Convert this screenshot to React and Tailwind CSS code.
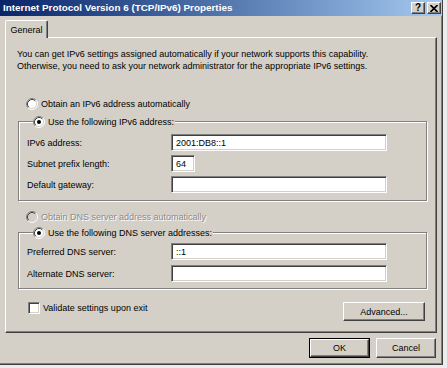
import React from "react";

const font = { fontFamily: '"Liberation Sans", Arial, sans-serif' };

// ── Radio ──────────────────────────────────────────────────
function Radio({ checked, disabled }) {
  return (
    <svg width="12" height="12" viewBox="0 0 12 12" className="shrink-0">
      <circle cx="6" cy="6" r="5" fill={disabled ? "#d4d0c8" : "#ffffff"} />
      <path d="M2.11 9.89 A5.5 5.5 0 0 1 9.89 2.11" fill="none" stroke="#808080" />
      <path d="M9.89 2.11 A5.5 5.5 0 0 1 2.11 9.89" fill="none" stroke="#ffffff" />
      <path d="M2.82 9.18 A4.5 4.5 0 0 1 9.18 2.82" fill="none" stroke="#404040" />
      <path d="M9.18 2.82 A4.5 4.5 0 0 1 2.82 9.18" fill="none" stroke="#d4d0c8" />
      {checked && <circle cx="6" cy="6" r="2" fill="#000000" />}
    </svg>
  );
}

function RadioRow({ label, checked, disabled }) {
  return (
    <div className="flex items-center gap-[3px] h-[13px]">
      <Radio checked={checked} disabled={disabled} />
      <span className={disabled ? "text-[#8a8a8a] [text-shadow:1px_1px_0_#ffffff]" : "text-black"}>{label}</span>
    </div>
  );
}

// ── Field ──────────────────────────────────────────────────
function Field({ label, value = "", w = "w-[216px]" }) {
  return (
    <div className="flex items-center h-[17px]">
      <span className="w-[144px] shrink-0">{label}</span>
      <div
        className={`${w} h-[17px] bg-white border border-t-[#808080] border-l-[#808080] border-b-white border-r-white shadow-[inset_1px_1px_0_#404040,inset_-1px_-1px_0_#d4d0c8] flex items-center pl-[4px] text-black`}
      >
        {value}
      </div>
    </div>
  );
}

// ── Group box ──────────────────────────────────────────────
function Group({ legend, children, className = "" }) {
  return (
    <fieldset
      className={`ml-[12px] w-[409px] border border-[#808080] shadow-[inset_1px_1px_0_#ffffff,1px_1px_0_#ffffff] pl-[8px] ${className}`}
    >
      <legend className="ml-[6px] pr-[1px] bg-[#d4d0c8] relative">
        <RadioRow label={legend} checked />
      </legend>
      {children}
    </fieldset>
  );
}

// ── Button ─────────────────────────────────────────────────
function Button({ children, className = "", isDefault }) {
  const raised =
    "bg-[#d4d0c8] border border-t-white border-l-white border-r-[#404040] border-b-[#404040] shadow-[inset_-1px_-1px_0_#808080,inset_1px_1px_0_#d4d0c8]";
  if (isDefault) {
    return (
      <div className={`border border-black ${className}`}>
        <div className={`${raised} w-full h-full flex items-center justify-center`}>{children}</div>
      </div>
    );
  }
  return <div className={`${raised} flex items-center justify-center ${className}`}>{children}</div>;
}

function CaptionButton({ children }) {
  return (
    <div className="w-[14px] h-[12px] bg-[#d4d0c8] border border-t-white border-l-white border-r-[#404040] border-b-[#404040] shadow-[inset_-1px_-1px_0_#808080] flex items-center justify-center text-black font-bold text-[10px] leading-none">
      {children}
    </div>
  );
}

export default function App() {
  return (
    <div className="w-[447px] h-[368px] bg-[#ececec] text-[9px] leading-[12px] text-black" style={font}>
      <div className="w-[443px] h-[365px] bg-[#d4d0c8] border-r border-b border-r-[#404040] border-b-[#404040] shadow-[inset_-1px_-1px_0_#808080] flex flex-col">
        {/* title bar */}
        <div className="h-[16px] bg-gradient-to-r from-[#0a246a] to-[#a6caf0] flex items-center justify-between pl-[3px] pr-[1px]">
          <span className="text-white font-bold text-[9.9px]">Internet Protocol Version 6 (TCP/IPv6) Properties</span>
          <div className="flex gap-[2px]">
            <CaptionButton>?</CaptionButton>
            <CaptionButton>
              <svg width="8" height="7" viewBox="0 0 8 7">
                <path d="M0.5 0 L7.5 7 M7.5 0 L0.5 7" stroke="#000" strokeWidth="1.6" />
              </svg>
            </CaptionButton>
          </div>
        </div>

        {/* tab strip */}
        <div className="pl-[5px] pt-[4px] flex">
          <div className="relative z-10 -mb-[1px] h-[18px] w-[43px] bg-[#d4d0c8] border-t border-l border-t-white border-l-white border-r border-r-[#404040] shadow-[inset_-1px_0_0_#808080] rounded-t-[2px] flex items-center justify-center">
            General
          </div>
        </div>

        {/* tab panel */}
        <div className="ml-[5px] w-[432px] h-[296px] border border-t-white border-l-white border-r-[#404040] border-b-[#404040] shadow-[inset_-1px_-1px_0_#808080] flex flex-col">
          <p className="mt-[10px] ml-[11px] whitespace-nowrap">
            You can get IPv6 settings assigned automatically if your network supports this capability.
            <br />
            Otherwise, you need to ask your network administrator for the appropriate IPv6 settings.
          </p>

          <div className="mt-[25px] ml-[20px]">
            <RadioRow label="Obtain an IPv6 address automatically" />
          </div>

          <Group legend="Use the following IPv6 address:" className="mt-[5px] pt-[6px] pb-[7px]">
            <div className="flex flex-col gap-[4px]">
              <Field label="IPv6 address:" value="2001:DB8::1" />
              <Field label="Subnet prefix length:" value="64" w="w-[24px]" />
              <Field label="Default gateway:" />
            </div>
          </Group>

          <div className="mt-[9px] ml-[20px]">
            <RadioRow label="Obtain DNS server address automatically" disabled />
          </div>

          <Group legend="Use the following DNS server addresses:" className="mt-[3px] pt-[4px] pb-[6px]">
            <div className="flex flex-col gap-[5px]">
              <Field label="Preferred DNS server:" value="::1" />
              <Field label="Alternate DNS server:" />
            </div>
          </Group>

          <div className="mt-[13px] ml-[22px] mr-[11px] flex items-start justify-between">
            <div className="flex items-center gap-[3px] h-[12px]">
              <div className="w-[12px] h-[12px] bg-white border border-t-[#808080] border-l-[#808080] border-b-white border-r-white shadow-[inset_1px_1px_0_#404040,inset_-1px_-1px_0_#d4d0c8]" />
              <span>Validate settings upon exit</span>
            </div>
            <Button className="w-[82px] h-[19px]">Advanced...</Button>
          </div>
        </div>

        {/* dialog buttons */}
        <div className="mt-[5px] mr-[6px] flex justify-end gap-[6px]">
          <Button isDefault className="w-[61px] h-[20px]">OK</Button>
          <Button className="w-[60px] h-[20px]">Cancel</Button>
        </div>
      </div>
    </div>
  );
}
